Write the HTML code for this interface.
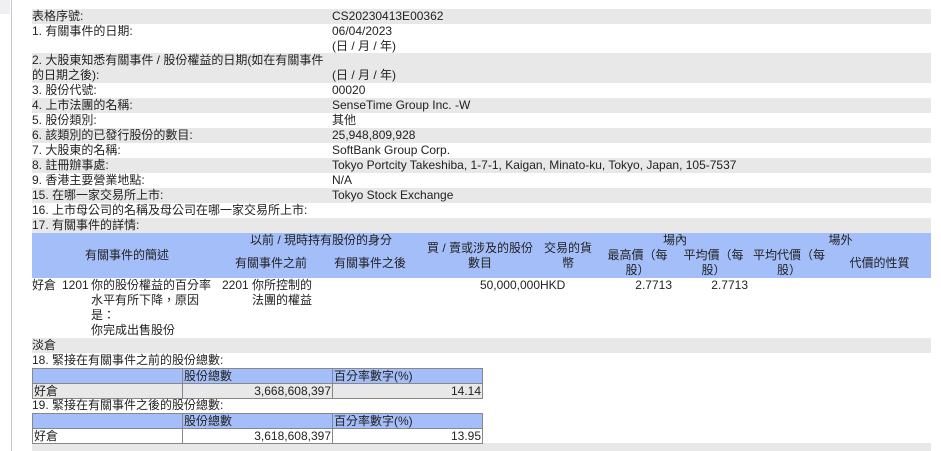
<!DOCTYPE html>
<html><head><meta charset="utf-8"><style>
*{margin:0;padding:0;box-sizing:border-box}
body{width:941px;height:451px;background:#fff;position:relative;overflow:hidden;font-family:"Liberation Sans","Noto Sans CJK TC",sans-serif;font-size:12px;color:#222;line-height:15px}
.a{position:absolute;white-space:nowrap}
.g{background:#e8e8e8}
.b{background:#a4bef9}
.r{position:absolute;left:32px;width:899px}
.c{text-align:center}
.t{position:absolute;border-collapse:collapse;left:32px;width:451px}
.t td{border:1px solid #888;height:15px;padding:0 1px;line-height:13px;font-size:12px}
</style></head><body>
<div class="a" style="left:0;top:0;width:10px;height:14px;background:#f0f0f2"></div>
<div class="a" style="left:11px;top:0;width:1px;height:451px;background:#c8c8d4"></div>

<div class="r g" style="top:9px;height:15px"></div>
<div class="r g" style="top:53px;height:30px"></div>
<div class="r g" style="top:98px;height:15px"></div>
<div class="r g" style="top:128px;height:15px"></div>
<div class="r g" style="top:158px;height:15px"></div>
<div class="r g" style="top:188px;height:15px"></div>
<div class="r g" style="top:218px;height:15px"></div>
<div class="r g" style="top:338px;height:15px"></div>
<div class="r g" style="top:443px;height:8px"></div>

<div class="a" style="left:32px;top:9px">表格序號:</div><div class="a" style="left:332px;top:9px">CS20230413E00362</div>
<div class="a" style="left:32px;top:24px">1. 有關事件的日期:</div><div class="a" style="left:332px;top:24px">06/04/2023<br>(日 / 月 / 年)</div>
<div class="a" style="left:32px;top:53px">2. 大股東知悉有關事件 / 股份權益的日期(如在有關事件<br>的日期之後):</div><div class="a" style="left:332px;top:68px">(日 / 月 / 年)</div>
<div class="a" style="left:32px;top:83px">3. 股份代號:</div><div class="a" style="left:332px;top:83px">00020</div>
<div class="a" style="left:32px;top:98px">4. 上市法團的名稱:</div><div class="a" style="left:332px;top:98px">SenseTime Group Inc. -W</div>
<div class="a" style="left:32px;top:113px">5. 股份類別:</div><div class="a" style="left:332px;top:113px">其他</div>
<div class="a" style="left:32px;top:128px">6. 該類別的已發行股份的數目:</div><div class="a" style="left:332px;top:128px">25,948,809,928</div>
<div class="a" style="left:32px;top:143px">7. 大股東的名稱:</div><div class="a" style="left:332px;top:143px">SoftBank Group Corp.</div>
<div class="a" style="left:32px;top:158px">8. 註冊辦事處:</div><div class="a" style="left:332px;top:158px">Tokyo Portcity Takeshiba, 1-7-1, Kaigan, Minato-ku, Tokyo, Japan, 105-7537</div>
<div class="a" style="left:32px;top:173px">9. 香港主要營業地點:</div><div class="a" style="left:332px;top:173px">N/A</div>
<div class="a" style="left:32px;top:188px">15. 在哪一家交易所上市:</div><div class="a" style="left:332px;top:188px">Tokyo Stock Exchange</div>
<div class="a" style="left:32px;top:203px">16. 上市母公司的名稱及母公司在哪一家交易所上市:</div>
<div class="a" style="left:32px;top:218px">17. 有關事件的詳情:</div>

<div class="r b" style="top:233px;height:45px"></div>
<div class="a c" style="left:32px;top:248px;width:190px">有關事件的簡述</div>
<div class="a c" style="left:222px;top:233px;width:198px">以前 / 現時持有股份的身分</div>
<div class="a c" style="left:222px;top:256px;width:98px">有關事件之前</div>
<div class="a c" style="left:320px;top:256px;width:100px">有關事件之後</div>
<div class="a c" style="left:420px;top:241px;width:120px">買 / 賣或涉及的股份<br>數目</div>
<div class="a c" style="left:540px;top:241px;width:56px;white-space:normal">交易的貨幣</div>
<div class="a c" style="left:600px;top:233px;width:150px">場內</div>
<div class="a c" style="left:750px;top:233px;width:181px">場外</div>
<div class="a c" style="left:600px;top:248px;width:75px;white-space:normal">最高價（每股）</div>
<div class="a c" style="left:676px;top:248px;width:75px;white-space:normal">平均價（每股）</div>
<div class="a c" style="left:750px;top:248px;width:78px;white-space:normal">平均代價（每股）</div>
<div class="a c" style="left:828px;top:256px;width:103px">代價的性質</div>

<div class="a" style="left:32px;top:278px">好倉</div>
<div class="a" style="left:62px;top:278px">1201</div>
<div class="a" style="left:91px;top:278px;width:125px;white-space:normal">你的股份權益的百分率水平有所下降，原因是：<br>你完成出售股份</div>
<div class="a" style="left:222px;top:278px">2201</div>
<div class="a" style="left:252px;top:278px;width:62px;white-space:normal">你所控制的法團的權益</div>
<div class="a" style="left:420px;top:278px;width:120px;text-align:right">50,000,000</div>
<div class="a" style="left:540px;top:278px">HKD</div>
<div class="a" style="left:600px;top:278px;width:72px;text-align:right">2.7713</div>
<div class="a" style="left:676px;top:278px;width:72px;text-align:right">2.7713</div>

<div class="a" style="left:32px;top:338px">淡倉</div>
<div class="a" style="left:32px;top:353px">18. 緊接在有關事件之前的股份總數:</div>
<table class="t" style="top:368px">
<tr class="b"><td style="width:150px"></td><td style="width:150px">股份總數</td><td>百分率數字(%)</td></tr>
<tr class="g"><td>好倉</td><td style="text-align:right">3,668,608,397</td><td style="text-align:right">14.14</td></tr>
</table>
<div class="a" style="left:32px;top:398px">19. 緊接在有關事件之後的股份總數:</div>
<table class="t" style="top:413px">
<tr class="b"><td style="width:150px"></td><td style="width:150px">股份總數</td><td>百分率數字(%)</td></tr>
<tr><td>好倉</td><td style="text-align:right">3,618,608,397</td><td style="text-align:right">13.95</td></tr>
</table>
</body></html>
